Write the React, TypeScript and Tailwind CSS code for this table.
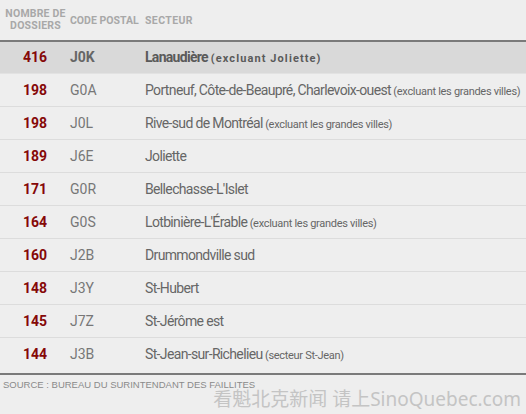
import React from "react";

const rows: { n: string; code: string; name: string; note?: string }[] = [
  { n: "198", code: "G0A", name: "Portneuf, Côte-de-Beaupré, Charlevoix-ouest", note: "(excluant les grandes villes)" },
  { n: "198", code: "J0L", name: "Rive-sud de Montréal", note: "(excluant les grandes villes)" },
  { n: "189", code: "J6E", name: "Joliette" },
  { n: "171", code: "G0R", name: "Bellechasse-L'Islet" },
  { n: "164", code: "G0S", name: "Lotbinière-L'Érable", note: "(excluant les grandes villes)" },
  { n: "160", code: "J2B", name: "Drummondville sud" },
  { n: "148", code: "J3Y", name: "St-Hubert" },
  { n: "145", code: "J7Z", name: "St-Jérôme est" },
  { n: "144", code: "J3B", name: "St-Jean-sur-Richelieu", note: "(secteur St-Jean)" },
];

const cond = { fontFamily: 'Roboto, "Liberation Sans", sans-serif' };

export default function App() {
  return (
    <div className="w-[526px] h-[414px] bg-[#eeeeee] overflow-hidden relative" style={cond}>
      <div className="h-[40px] flex items-center text-[#a8a8a8] font-bold text-[10.5px] leading-[12px] whitespace-nowrap">
        <div className="w-[70px] shrink-0 text-center tracking-[0.2px] pl-[1px]">
          <div>NOMBRE DE</div>
          <div>DOSSIERS</div>
        </div>
        <div className="w-[75px] shrink-0 pt-[1px]">CODE POSTAL</div>
        <div className="pt-[1px] tracking-[0.4px]">SECTEUR</div>
      </div>
      <div className="h-[2px] bg-[#7a7a7a]" />
      <div className="h-[32px] bg-[#d9d9d9] flex items-center border-b border-[#e2e2e2] whitespace-nowrap">
        <div className="w-[70px] shrink-0 text-center text-[#850808] font-bold text-[14px]">416</div>
        <div className="w-[75px] shrink-0 text-[#666] font-bold text-[14px]">J0K</div>
        <div className="text-[#5a5a5a] font-bold text-[14px] tracking-[-0.7px]">
          Lanaudière <span className="text-[11px] tracking-[1.1px]">(excluant Joliette)</span>
        </div>
      </div>
      {rows.map((r, i) => (
        <div key={i} className={"h-[33px] flex items-center whitespace-nowrap " + (i < rows.length - 1 ? "border-b border-[#dcdcdc]" : "")}>
          <div className="w-[70px] shrink-0 text-center text-[#850808] font-bold text-[14px]">{r.n}</div>
          <div className="w-[75px] shrink-0 text-[#777] text-[14px]">{r.code}</div>
          <div className="text-[#666] text-[14px] tracking-[-0.65px]">
            {r.name}
            {r.note && <span className="text-[11px] tracking-[-0.3px]"> {r.note}</span>}
          </div>
        </div>
      ))}
      <div className="h-[2px] bg-[#7a7a7a] mt-[2px]" />
      <div className="pl-[3px] pt-[3px] text-[9.5px] text-[#8a8a8a]" style={{ fontFamily: '"Liberation Sans", Arial, sans-serif' }}>
        SOURCE : BUREAU DU SURINTENDANT DES FAILLITES
      </div>
      <div
        className="absolute right-[5px] bottom-[1px] text-[19px] text-[#c4c4c4]"
        style={{ fontFamily: '"Noto Sans", "Noto Sans CJK SC", sans-serif' }}
      >
        看魁北克新闻 请上SinoQuebec.com
      </div>
    </div>
  );
}
